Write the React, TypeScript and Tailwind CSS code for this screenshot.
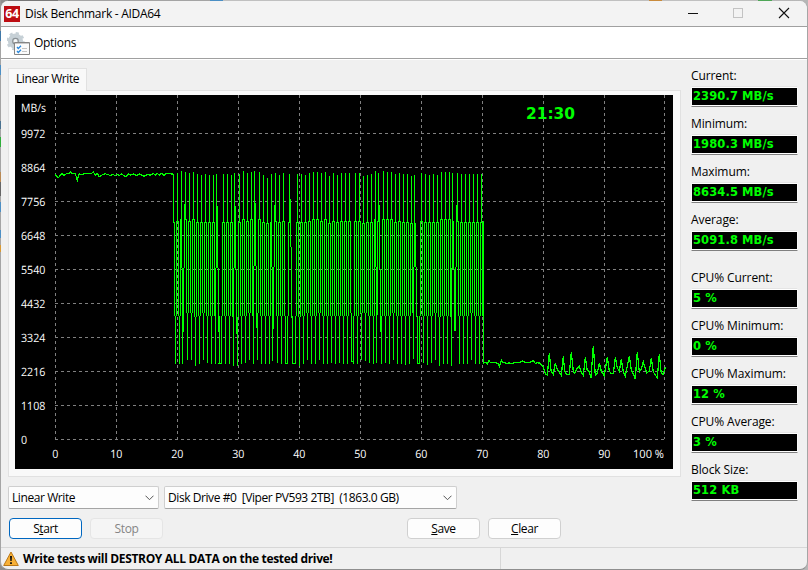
import React from "react";

const UI = "font-['Open_Sans','Noto_Sans',sans-serif] text-[12px] leading-[16px] text-black";

type Run = [number, number, number];

const levels = [9972, 8864, 7756, 6648, 5540, 4432, 3324, 2216, 1108, 0];
const percents = [0, 10, 20, 30, 40, 50, 60, 70, 80, 90];
const columns = [55, 116, 177, 238, 299, 360, 421, 482, 543, 604, 664];

// Upper peaks of the oscillating section: [x, y]
const peaks: [number, number][] = [
  [173, 174], [177, 173], [181, 171], [185, 172], [189, 173], [193, 172], [197, 174], [201, 175], [205, 174],
  [209, 175], [213, 175], [216, 174], [223, 174], [227, 174], [231, 175], [234, 173], [239, 174], [243, 171],
  [247, 173], [251, 172], [254, 171], [259, 172], [263, 175], [267, 178], [271, 174], [275, 173], [279, 175],
  [283, 173], [289, 174], [297, 174], [301, 174], [305, 175], [309, 173], [313, 172], [317, 172], [321, 173],
  [325, 172], [329, 176], [333, 173], [337, 175], [341, 173], [345, 173], [349, 173], [355, 173], [359, 173],
  [363, 176], [367, 175], [371, 174], [375, 171], [378, 173], [383, 171], [387, 172], [391, 172], [395, 174],
  [399, 173], [403, 174], [407, 174], [411, 176], [414, 175], [421, 173], [425, 174], [429, 175], [433, 174],
  [437, 175], [441, 172], [445, 172], [449, 172], [452, 173], [457, 173], [461, 174], [465, 174], [469, 174],
  [473, 174], [477, 174], [481, 174],
];

// Lower peaks: [x, y]
const dips: [number, number][] = [
  [175, 364], [179, 364], [182, 364], [187, 360], [191, 360], [195, 366], [199, 364], [203, 360], [207, 363],
  [211, 364], [215, 364], [219, 364], [221, 364], [225, 364], [229, 364], [233, 366], [237, 366], [241, 364],
  [245, 363], [249, 360], [253, 364], [257, 360], [261, 364], [265, 364], [269, 364], [272, 361], [277, 363],
  [281, 364], [285, 364], [287, 364], [292, 364], [295, 364], [299, 366], [303, 364], [307, 360], [311, 364],
  [315, 364], [319, 360], [323, 364], [327, 364], [331, 363], [335, 364], [339, 363], [343, 364], [347, 364],
  [351, 361], [353, 364], [357, 364], [361, 360], [365, 361], [369, 363], [373, 364], [376, 363], [381, 364],
  [385, 363], [389, 364], [393, 360], [397, 364], [401, 364], [405, 365], [409, 364], [413, 359], [417, 364],
  [419, 363], [423, 363], [427, 365], [431, 363], [435, 360], [439, 366], [443, 364], [447, 364], [451, 366],
  [459, 364], [463, 364], [467, 364], [471, 360], [475, 364], [479, 364],
];

// Columns left out of the regular two-pixel rhythm
const skipped = new Set([
  182, 184, 216, 218, 220, 234, 236, 254, 256, 272, 274, 286, 290, 292, 294, 352, 376, 378, 380, 414, 416, 418, 452, 454, 456,
]);

const special: Run[] = [
  [181, 219, 268], [182, 268, 318], [183, 268, 332], [184, 204, 268],
  [215, 268, 318], [216, 219, 268], [217, 206, 268], [218, 268, 332],
  [233, 268, 318], [234, 219, 268], [235, 206, 269], [236, 269, 334],
  [253, 266, 318], [254, 219, 266], [255, 203, 266], [256, 266, 328],
  [271, 219, 267], [272, 267, 318], [273, 267, 329], [274, 205, 267],
  [290, 199, 247], [291, 247, 318],
  [375, 219, 267], [376, 267, 318], [377, 221, 315], [379, 205, 269], [380, 269, 332],
  [413, 267, 317], [414, 221, 267], [415, 223, 267], [416, 267, 317],
  [451, 268, 317], [452, 219, 269], [453, 221, 269], [454, 269, 331], [455, 267, 331], [456, 205, 267],
];

const nearest = (list: [number, number][], x: number) =>
  list.reduce((a, b) => (Math.abs(b[0] - x) < Math.abs(a[0] - x) ? b : a))[1];
const topAt = (x: number) => {
  const p = nearest(peaks, x);
  return p > 175 ? 223 : p > 173 ? 222 : p > 172 ? 221 : 219;
};
const bottomAt = (x: number) => {
  const d = nearest(dips, x);
  return d > 365 ? 317 : d > 361 ? 316 : 313;
};

const runs: Run[] = [
  ...peaks.map(([x, y]): Run => [x, y, topAt(x) + 1]),
  ...dips.map(([x, y]): Run => [x, bottomAt(x), y]),
  ...special,
];
for (let x = 174; x <= 482; x += 2) {
  if (!skipped.has(x)) runs.push([x, topAt(x), bottomAt(x)]);
}
const wave = runs.map(([x, a, b]) => `M${x} ${a}h1V${b}h-1z`).join("");

const lead =
  "166,72 175,82 186,69 192,74 200,69 206,70 211,64 216,70 226,70 232,89 238,70 244,73 252,70 274,70 280,64 286,75 292,69 298,79 308,72 316,70 326,73 332,76 338,71 345,75 352,71 358,75 364,70 376,79 386,70 392,74 400,70 410,76 418,70 424,73 432,77 444,71 450,75 460,69 466,74 472,68 478,75 484,68 492,74 500,68 510,70 521,71";
const tail =
  "41,97 48,97 52,100 57,91 62,97 75,97 84,98 88,108 94,89 98,97 106,97 112,99 118,97 124,100 131,97 148,97 158,91 168,97 178,97 190,90 196,99 202,97 210,98 218,106 226,130 232,134 238,67 243,120 250,131 256,97 262,117 274,135 280,78 284,122 290,131 298,131 304,66 310,122 314,129 320,115 328,108 334,124 340,135 346,81 352,120 356,120 363,142 370,46 376,134 382,129 388,98 394,122 403,136 412,79 418,122 424,130 430,130 436,80 442,112 448,122 454,86 460,124 466,137 478,77 484,118 496,145 502,64 508,124 514,116 520,94 530,127 538,122 544,84 550,124 562,142 568,70 574,129 580,131 586,110";
const plot = (s: string, ox: number, oy: number) =>
  s.split(" ").map((p) => {
    const [x, y] = p.split(",").map(Number);
    return `${(x / 3 + ox).toFixed(1)},${(y / 3 + oy).toFixed(1)}`;
  }).join(" ");

function Chart() {
  return (
    <svg width="658" height="374" viewBox="15 95 658 374" className="block bg-black" shapeRendering="crispEdges">
      <g stroke="#808080" strokeDasharray="3 3">
        {levels.map((v, i) => (
          <line key={v} x1="55" x2="665" y1={133.5 + i * 34} y2={133.5 + i * 34} />
        ))}
        {columns.map((x) => (
          <line key={x} x1={x + 0.5} x2={x + 0.5} y1="95" y2="439" />
        ))}
      </g>
      <polyline points={plot(lead, 0, 150.5)} fill="none" stroke="#00ff00" strokeWidth="1.2" />
      <polyline points={plot(tail, 470, 330.5)} fill="none" stroke="#00ff00" strokeWidth="1.25" />
      <path d={wave} fill="#00ff00" />
      <path d="M218 363h4v1h-4zM285 363h3v1h-3zM292 363h4v1h-4zM351 361h2v1h-2zM417 363h3v1h-3zM483 221h1V364h-1z" fill="#00ff00" />
      <g fill="#fff" className="font-['Open_Sans','Noto_Sans',sans-serif] text-[11.5px]" textRendering="geometricPrecision">
        <text x="21" y="112" textLength="25" lengthAdjust="spacingAndGlyphs">MB/s</text>
        {levels.map((v, i) => (
          <text key={v} x="21" y={138 + i * 34} textLength={String(v).length * 6.1} lengthAdjust="spacingAndGlyphs">{v}</text>
        ))}
        {percents.map((v, i) => (
          <text key={v} x={55.3 + i * 61} y="458" textAnchor="middle" textLength={String(v).length * 6.1} lengthAdjust="spacingAndGlyphs">{v}</text>
        ))}
        <text x="633" y="458" textLength="31" lengthAdjust="spacingAndGlyphs">100 %</text>
      </g>
      <text x="526" y="119" fill="#00ff00" textLength="49" lengthAdjust="spacingAndGlyphs" className="font-['DejaVu_Sans',sans-serif] text-[16px] font-bold">21:30</text>
    </svg>
  );
}

function Reading({ label, value, gap }: { label: string; value: string; gap?: boolean }) {
  return (
    <div className={gap ? "mt-[10px] h-12" : "h-12"}>
      <div className="h-[19px] pt-px tracking-[-0.1px]">{label}</div>
      <div className="h-[21px] w-[107px] border border-b-[#808080] border-l-[#f8f8f8] border-r-[#f8f8f8] border-t-[#e5e5e5] bg-black pl-px font-['DejaVu_Sans',sans-serif] text-[11.5px] font-bold leading-[19px] tracking-[0.1px] text-[#00ff00] shadow-[inset_0_-1px_white,inset_0_1px_white]">
        <span className="whitespace-pre">{value}</span>
      </div>
    </div>
  );
}

function Combo({ className, children }: { className: string; children: React.ReactNode }) {
  return (
    <div className={`flex h-[23px] items-center justify-between whitespace-pre rounded-[2px] border border-[#cfcfcf] border-b-[#a5a5a5] bg-[#fdfdfd] pl-[3px] pr-[4px] ${className}`}>
      {children}
      <svg width="9" height="6" viewBox="0 0 9 6" fill="none" stroke="#555"><path d="M.5 .7 4.5 4.7 8.500.7" /></svg>
    </div>
  );
}

export default function App() {
  return (
    <div className={`relative h-[570px] w-[808px] overflow-hidden bg-[linear-gradient(90deg,#8e8e8e,#a4a4a4_20%,#c6c6c6_50%,#b6b6b6)] pt-px ${UI}`}>
      <div className="flex h-[569px] flex-col overflow-hidden rounded-[8px] border border-t-0 border-[#a5a5a5] border-b-[#8e8e8e] bg-[#f0f0f0]">
        <header className="flex h-[26px] shrink-0 items-center border-b border-[#a0a0a0] bg-[#f3f3f3] pl-[3px]">
          <div className="flex h-4 w-4 items-center justify-center bg-[#bd0d12]">
            <span className="font-['Open_Sans',sans-serif] text-[12.5px] font-bold leading-4 tracking-[-0.5px] text-white">64</span>
          </div>
          <span className="ml-[5px] grow pt-px tracking-[-0.28px]">Disk Benchmark - AIDA64</span>
          <svg width="129" height="25" viewBox="678 1 129 25" fill="none" shapeRendering="crispEdges">
            <path d="M688 13.500h10" stroke="#111" />
            <rect x="733.5" y="8.500" width="9" height="9" rx="1" stroke="#c3c3c3" />
            <path d="m779 8 10 10m0-10-10 10" stroke="#111" strokeWidth="1.100" shapeRendering="auto" />
          </svg>
        </header>

        <nav className="flex h-[32px] shrink-0 items-center border-b border-[#a0a0a0] bg-white pl-[6px] shadow-[0_1px_#fff]">
          <svg width="24" height="24" viewBox="7 31 24 24">
            <circle cx="15.500" cy="41.200" r="5.300" fill="none" stroke="#c6d0d6" strokeWidth="4.600" />
            <circle cx="15.500" cy="41.200" r="8" fill="none" stroke="#c6d0d6" strokeWidth="2.400" strokeDasharray="3.140 3.140" />
            <circle cx="15.500" cy="41.200" r="2.800" fill="#f4f6f7" stroke="#8a9196" strokeWidth="1.300" />
            <path d="M14.500 42.500h15v12h-15z" fill="#fbfbfb" stroke="#858585" />
            <path d="M15 43.500h14" stroke="#c9c9c9" />
            <path d="m17 47 1.300 1.500 2.700-2.700M17 51l1.300 1.500L21 49.800" fill="none" stroke="#2786db" strokeWidth="1.300" />
            <path d="M22 48.500h5M22 51.500h5" stroke="#c5c5c5" />
          </svg>
          <span className="ml-[3px] pt-px tracking-[-0.3px]">Options</span>
        </nav>

        <div className="flex h-[427px] shrink-0">
          <section className="ml-[7px] mt-[9px] w-[673px]">
            <div className="relative -mb-px h-[23px] w-[79px] border border-b-0 border-[#e1e1e1] bg-[#f9f9f9] pl-[7px] pt-[2px] tracking-[-0.42px]">Linear Write</div>
            <div className="h-[387px] border border-[#e1e1e1] bg-[#f9f9f9] pl-[6px] pt-[4px]">
              <Chart />
            </div>
          </section>
          <aside className="ml-[10px] mt-[8px]">
            <Reading label="Current:" value="2390.7 MB/s" />
            <Reading label="Minimum:" value="1980.3 MB/s" />
            <Reading label="Maximum:" value="8634.5 MB/s" />
            <Reading label="Average:" value="5091.8 MB/s" />
            <Reading gap label="CPU% Current:" value="5 %" />
            <Reading label="CPU% Minimum:" value="0 %" />
            <Reading label="CPU% Maximum:" value="12 %" />
            <Reading label="CPU% Average:" value="3 %" />
            <Reading label="Block Size:" value="512 KB" />
          </aside>
        </div>

        <div className="flex h-[25px] shrink-0 gap-[5px] pl-[7px]">
          <Combo className="w-[151px] tracking-[-0.42px]">Linear Write</Combo>
          <Combo className="w-[293px] tracking-[-0.43px]">{"Disk Drive #0  [Viper PV593 2TB]  (1863.0 GB)"}</Combo>
        </div>

        <div className="flex h-[36px] shrink-0 pl-[8px] pt-[7px] tracking-[-0.4px]">
          <button className="h-[21px] w-[73px] rounded-[4px] border border-[#0067c0] bg-[#fdfdfd] pt-px leading-[18px]">S<u>t</u>art</button>
          <button className="ml-[8px] h-[21px] w-[73px] rounded-[4px] border border-[#e5e5e5] bg-[#f5f5f5] pt-px leading-[18px] text-[#858585]">Stop</button>
          <button className="ml-[244px] h-[21px] w-[73px] rounded-[4px] border border-[#d0d0d0] bg-[#fdfdfd] pt-px leading-[18px]"><u>S</u>ave</button>
          <button className="ml-[8px] h-[21px] w-[73px] rounded-[4px] border border-[#d0d0d0] bg-[#fdfdfd] pt-px leading-[18px]"><u>C</u>lear</button>
        </div>

        <footer className="flex grow items-stretch border-t border-[#d7d7d7]">
          <div className="flex w-[500px] items-center border-r border-[#d7d7d7] pl-[2px]">
            <svg width="16" height="16" viewBox="0 0 16 16">
              <path d="M8 1 15.300 14.500H.7z" fill="#f8b137" stroke="#b97717" strokeLinejoin="round" />
              <path d="M7 5h2l-.3 5H7.300zM7.100 11.300h1.800V13H7.100z" fill="#111" />
            </svg>
            <span className="ml-[4px] whitespace-nowrap text-[12px] font-bold tracking-[-0.34px]">Write tests will DESTROY ALL DATA on the tested drive!</span>
          </div>
        </footer>
      </div>
      {/* Slivers of the desktop showing past the window's edges */}
      <div className="absolute left-0 top-0 h-[260px] w-px bg-[linear-gradient(#9a9a9a_0_31px,#3f78a8_31px_41px,#a5a5a5_41px_65px,#4d8fc4_65px_75px,#a5a5a5_75px_121px,#4a7290_121px_129px,#a5a5a5_129px_137px,#2fae3a_137px_147px,#a5a5a5_147px_172px,#b98a55_172px_182px,#666_182px_196px,#a5a5a5_196px_202px,#4d8fc4_202px_212px,#a5a5a5_212px_230px,#4d8fc4_230px_238px,#a5a5a5_238px_245px,#d99a35_245px_252px,#a5a5a5_252px)]" />
      <div className="absolute left-[8px] top-0 h-px w-[750px] bg-[linear-gradient(90deg,#777_0_50px,#a4a4a4_50px_202px,#4b8fc4_202px_215px,#c0c0c0_215px_641px,#c98b3c_641px_654px,#c0c0c0_654px_750px)]" />
      <div className="absolute left-[758px] top-0 h-px w-[14px] bg-[#4ea657]" />
    </div>
  );
}
